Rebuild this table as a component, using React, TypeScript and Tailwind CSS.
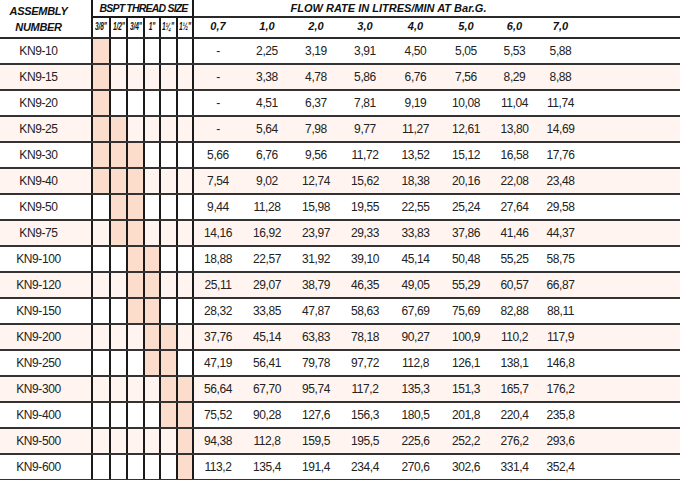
const cols =
	'grid grid-cols-[93px_18px_17px_17px_16px_17px_16px_48px_50px_48px_50px_51px_50px_47px_45px_1fr]';

const threads = ['3/8"', '1/2"', '3/4"', '1"', '1¼"', '1½"'];
const pressures = ['0,7', '1,0', '2,0', '3,0', '4,0', '5,0', '6,0', '7,0'];

// [assembly, thread columns that fit, flow values per pressure]
const rows: [string, number[], string[]][] = [
	['KN9-10', [0], ['-', '2,25', '3,19', '3,91', '4,50', '5,05', '5,53', '5,88']],
	['KN9-15', [0], ['-', '3,38', '4,78', '5,86', '6,76', '7,56', '8,29', '8,88']],
	['KN9-20', [0], ['-', '4,51', '6,37', '7,81', '9,19', '10,08', '11,04', '11,74']],
	['KN9-25', [0, 1], ['-', '5,64', '7,98', '9,77', '11,27', '12,61', '13,80', '14,69']],
	['KN9-30', [0, 1, 2], ['5,66', '6,76', '9,56', '11,72', '13,52', '15,12', '16,58', '17,76']],
	['KN9-40', [0, 1, 2], ['7,54', '9,02', '12,74', '15,62', '18,38', '20,16', '22,08', '23,48']],
	['KN9-50', [1, 2], ['9,44', '11,28', '15,98', '19,55', '22,55', '25,24', '27,64', '29,58']],
	['KN9-75', [1, 2], ['14,16', '16,92', '23,97', '29,33', '33,83', '37,86', '41,46', '44,37']],
	['KN9-100', [2, 3], ['18,88', '22,57', '31,92', '39,10', '45,14', '50,48', '55,25', '58,75']],
	['KN9-120', [2, 3], ['25,11', '29,07', '38,79', '46,35', '49,05', '55,29', '60,57', '66,87']],
	['KN9-150', [2, 3], ['28,32', '33,85', '47,87', '58,63', '67,69', '75,69', '82,88', '88,11']],
	['KN9-200', [3, 4], ['37,76', '45,14', '63,83', '78,18', '90,27', '100,9', '110,2', '117,9']],
	['KN9-250', [3, 4], ['47,19', '56,41', '79,78', '97,72', '112,8', '126,1', '138,1', '146,8']],
	['KN9-300', [4, 5], ['56,64', '67,70', '95,74', '117,2', '135,3', '151,3', '165,7', '176,2']],
	['KN9-400', [4, 5], ['75,52', '90,28', '127,6', '156,3', '180,5', '201,8', '220,4', '235,8']],
	['KN9-500', [5], ['94,38', '112,8', '159,5', '195,5', '225,6', '252,2', '276,2', '293,6']],
	['KN9-600', [5], ['113,2', '135,4', '191,4', '234,4', '270,6', '302,6', '331,4', '352,4']],
];

export default function App() {
	return (
		<div className="w-[680px] h-[480px] bg-white overflow-hidden text-[#222] font-['Liberation_Sans',Arial,sans-serif]">
			{/* Header */}
			<div className={`${cols} grid-rows-[18px_19px] border-b-2 border-[#2a2a2a] font-bold italic text-[#111]`}>
				<div className="row-span-2 border-r-2 border-[#1a1a1a] pr-[14px] pt-[3px] flex flex-col items-center text-[11px] leading-[16px] tracking-[-0.3px]">
					<span>ASSEMBLY</span>
					<span>NUMBER</span>
				</div>
				<div className="col-span-6 border-r-2 border-b-2 border-[#1a1a1a] flex items-end justify-center text-[10.5px] leading-[14px] tracking-[-0.8px] pb-[1px] pl-[2px]">
					BSPT THREAD SIZE
				</div>
				<div className="col-span-8 border-b-2 border-[#2a2a2a] flex items-end justify-center text-[11px] leading-[14px] pb-[1px]">
					FLOW RATE IN LITRES/MIN AT Bar.G.
				</div>
				<div className="border-b-2 border-[#2a2a2a]" />
				{threads.map((t) => (
					<div
						key={t}
						className="border-r-2 border-[#1a1a1a] flex items-center justify-center overflow-hidden pb-[2px]"
					>
						<span className="inline-block text-[10px] font-semibold tracking-[-0.2px] scale-x-[0.66] whitespace-nowrap">
							{t}
						</span>
					</div>
				))}
				{pressures.map((p) => (
					<div key={p} className="flex items-center justify-center text-[11px] pb-[2px]">
						{p}
					</div>
				))}
				<div />
			</div>

			{/* Body */}
			{rows.map(([name, fit, values], i) => (
				<div
					key={name}
					className={`${cols} h-[26px] border-b-2 border-[#333] text-[12px] tracking-[-0.4px] ${i % 2 === 1 ? 'bg-[#fff4ef]' : 'bg-white'}`}
				>
					<div className="border-r-2 border-[#1a1a1a] flex items-center justify-center pr-[14px]">
						{name}
					</div>
					{threads.map((t, j) => (
						<div
							key={t}
							className={`border-r-2 border-[#1a1a1a] ${fit.includes(j) ? 'bg-[#fcdcca]' : ''}`}
						/>
					))}
					{values.map((v, j) => (
						<div key={j} className="flex items-center justify-center">
							{v}
						</div>
					))}
					<div />
				</div>
			))}
		</div>
	);
}
